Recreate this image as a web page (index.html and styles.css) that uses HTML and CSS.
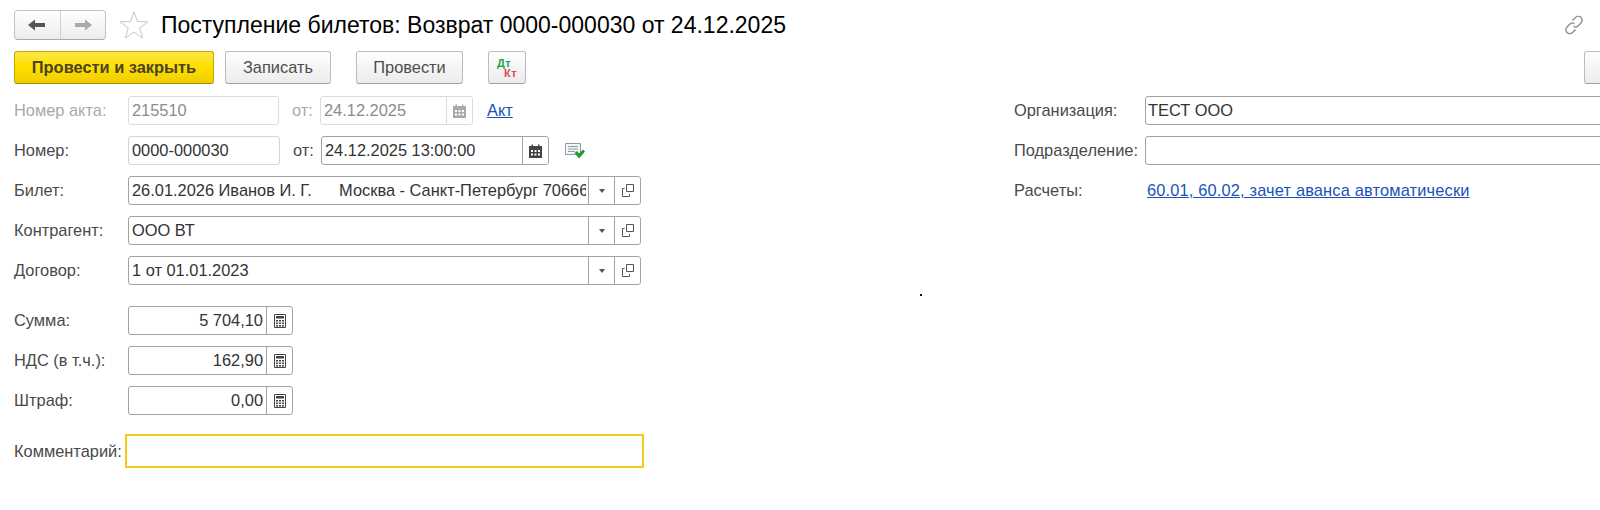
FILE: index.html
```html
<!DOCTYPE html>
<html>
<head>
  <meta charset="UTF-8">
  <title>Поступление билетов</title>
  <link rel="stylesheet" href="styles.css">
</head>
<body>
  <div class="page">
    <div class="title-row">
      <div class="nav-box">
        <div class="nav-btn">
          <svg width="18" height="12" viewBox="0 0 18 12"><path d="M0 6 L7 0.5 V4 H17 V8 H7 V11.500 Z" fill="#555"/></svg>
        </div>
        <div class="nav-btn">
          <svg width="18" height="12" viewBox="0 0 18 12"><path d="M18 6 L11 0.500 V4 H1 V8 H11 V11.500 Z" fill="#aaa"/></svg>
        </div>
      </div>
      <svg class="star" width="30" height="28" viewBox="0 0 30 28"><path d="M15 1 L18.500 10.500 L29 10.800 L20.700 17 L23.700 27 L15 21.200 L6.300 27 L9.300 17 L1 10.800 L11.500 10.500 Z" fill="#fff" stroke="#c4c8cc" stroke-width="1"/></svg>
      <h1 class="title">Поступление билетов: Возврат 0000-000030 от 24.12.2025</h1>
      <svg class="link-icon" width="20" height="20" viewBox="0 0 20 20" fill="none" stroke="#8c8c8c" stroke-width="1.4"><path d="M8.500 5.500 L11.500 2.500 C13 1 15.500 1 17 2.500 C18.500 4 18.500 6.500 17 8 L14 11 C12.700 12.300 10.800 12.300 9.500 11.200"/><path d="M11.500 14.500 L8.500 17.500 C7 19 4.500 19 3 17.500 C1.500 16 1.500 13.500 3 12 L6 9 C7.300 7.700 9.200 7.700 10.500 8.800"/></svg>
    </div>

    <div class="toolbar">
      <div class="btn btn-main">Провести и закрыть</div>
      <div class="btn btn-save">Записать</div>
      <div class="btn btn-post">Провести</div>
      <div class="btn btn-dtkt"><span class="dt">Дт</span><span class="kt">Кт</span></div>
      <div class="btn btn-more"></div>
    </div>

    <div class="form">
      <div class="col-left">
        <div class="row muted">
          <span class="label">Номер акта:</span>
          <div class="field w-num"><span class="value">215510</span></div>
          <span class="from">от:</span>
          <div class="field w-date">
            <span class="value">24.12.2025</span>
            <span class="addon">
              <svg width="13" height="14" viewBox="0 0 13 14"><path d="M0 2 H2.500 V0.500 H4 V2 H9 V0.500 H10.500 V2 H13 V14 H0 Z" fill="#aaa"/><path d="M2 6 H4 V8 H2 Z M5.500 6 H7.500 V8 H5.500 Z M9 6 H11 V8 H9 Z M2 9.500 H4 V11.500 H2 Z M5.500 9.500 H7.500 V11.500 H5.500 Z M9 9.500 H11 V11.500 H9 Z" fill="#fff"/></svg>
            </span>
          </div>
          <a class="link akt">Акт</a>
        </div>
        <div class="row">
          <span class="label">Номер:</span>
          <div class="field field-soft w-num2"><span class="value">0000-000030</span></div>
          <span class="from">от:</span>
          <div class="field w-datetime">
            <span class="value">24.12.2025 13:00:00</span>
            <span class="addon">
              <svg width="13" height="14" viewBox="0 0 13 14"><path d="M0 2 H2.500 V0.500 H4 V2 H9 V0.500 H10.500 V2 H13 V14 H0 Z" fill="#444"/><path d="M2 6 H4 V8 H2 Z M5.500 6 H7.500 V8 H5.500 Z M9 6 H11 V8 H9 Z M2 9.500 H4 V11.500 H2 Z M5.500 9.500 H7.500 V11.500 H5.500 Z M9 9.500 H11 V11.500 H9 Z" fill="#fff"/></svg>
            </span>
          </div>
          <svg class="doc-check" width="20" height="16" viewBox="0 0 20 16"><path d="M0.500 0.500 H15.500 V11.500 H0.500 Z" fill="#f4f6f8" stroke="#8a9bb0"/><path d="M3 3.500 H13 M3 6 H13 M3 8.500 H10" stroke="#8a9bb0"/><path d="M9.500 10 L12 8 L14 10.500 L18 6.500 L20 8.500 L14 15.500 Z" fill="#1f9a2d"/></svg>
        </div>
        <div class="row">
          <span class="label">Билет:</span>
          <div class="field w-wide">
            <span class="value clip">26.01.2026 Иванов И. Г.&nbsp;&nbsp;&nbsp;&nbsp;&nbsp; Москва - Санкт-Петербург 706666</span>
            <span class="addon"><i class="caret"></i></span>
            <span class="addon"><svg width="12" height="13" viewBox="0 0 12 13" fill="none" stroke="#555"><path d="M4.500 0.500 H11.500 V7.500 H4.500 Z"/><path d="M2.500 4.500 H0.500 V12.500 H1 M0.500 12.500 H7.500 V10"/></svg></span>
          </div>
        </div>
        <div class="row">
          <span class="label">Контрагент:</span>
          <div class="field w-wide">
            <span class="value clip">ООО ВТ</span>
            <span class="addon"><i class="caret"></i></span>
            <span class="addon"><svg width="12" height="13" viewBox="0 0 12 13" fill="none" stroke="#555"><path d="M4.500 0.500 H11.500 V7.500 H4.500 Z"/><path d="M2.500 4.500 H0.500 V12.500 H1 M0.500 12.500 H7.500 V10"/></svg></span>
          </div>
        </div>
        <div class="row">
          <span class="label">Договор:</span>
          <div class="field w-wide">
            <span class="value clip">1 от 01.01.2023</span>
            <span class="addon"><i class="caret"></i></span>
            <span class="addon"><svg width="12" height="13" viewBox="0 0 12 13" fill="none" stroke="#555"><path d="M4.500 0.500 H11.500 V7.500 H4.500 Z"/><path d="M2.500 4.500 H0.500 V12.500 H1 M0.500 12.500 H7.500 V10"/></svg></span>
          </div>
        </div>
        <div class="row group-start">
          <span class="label">Сумма:</span>
          <div class="field w-sum">
            <span class="value num">5 704,10</span>
            <span class="addon"><svg width="12" height="14" viewBox="0 0 12 14"><path d="M0.500 0.500 H11.500 V13.500 H0.500 Z" fill="#fff" stroke="#444"/><path d="M2 2 H10 V4.500 H2 Z M2 6 H4 V7.500 H2 Z M5 6 H7 V7.500 H5 Z M8 6 H10 V7.500 H8 Z M2 8.500 H4 V10 H2 Z M5 8.500 H7 V10 H5 Z M8 8.500 H10 V10 H8 Z M2 11 H4 V12.500 H2 Z M5 11 H7 V12.500 H5 Z M8 11 H10 V12.500 H8 Z" fill="#444"/></svg></span>
          </div>
        </div>
        <div class="row">
          <span class="label">НДС (в т.ч.):</span>
          <div class="field w-sum">
            <span class="value num">162,90</span>
            <span class="addon"><svg width="12" height="14" viewBox="0 0 12 14"><path d="M0.500 0.500 H11.500 V13.500 H0.500 Z" fill="#fff" stroke="#444"/><path d="M2 2 H10 V4.500 H2 Z M2 6 H4 V7.500 H2 Z M5 6 H7 V7.500 H5 Z M8 6 H10 V7.500 H8 Z M2 8.500 H4 V10 H2 Z M5 8.500 H7 V10 H5 Z M8 8.500 H10 V10 H8 Z M2 11 H4 V12.500 H2 Z M5 11 H7 V12.500 H5 Z M8 11 H10 V12.500 H8 Z" fill="#444"/></svg></span>
          </div>
        </div>
        <div class="row">
          <span class="label">Штраф:</span>
          <div class="field w-sum">
            <span class="value num">0,00</span>
            <span class="addon"><svg width="12" height="14" viewBox="0 0 12 14"><path d="M0.500 0.500 H11.500 V13.500 H0.500 Z" fill="#fff" stroke="#444"/><path d="M2 2 H10 V4.500 H2 Z M2 6 H4 V7.500 H2 Z M5 6 H7 V7.500 H5 Z M8 6 H10 V7.500 H8 Z M2 8.500 H4 V10 H2 Z M5 8.500 H7 V10 H5 Z M8 8.500 H10 V10 H8 Z M2 11 H4 V12.500 H2 Z M5 11 H7 V12.500 H5 Z M8 11 H10 V12.500 H8 Z" fill="#444"/></svg></span>
          </div>
        </div>
        <div class="row row-comment">
          <span class="label label-comment">Комментарий:</span>
          <div class="field-focus"></div>
        </div>
      </div>

      <div class="col-right">
        <div class="row">
          <span class="label label-right">Организация:</span>
          <div class="field w-right"><span class="value value-right">ТЕСТ ООО</span></div>
        </div>
        <div class="row">
          <span class="label label-right">Подразделение:</span>
          <div class="field w-right"></div>
        </div>
        <div class="row">
          <span class="label label-right">Расчеты:</span>
          <a class="link calc-link">60.01, 60.02, зачет аванса автоматически</a>
        </div>
      </div>
    </div>
    <span class="cursor-dot"></span>
  </div>
</body>
</html>
```

FILE: styles.css
```css
body {
  margin: 0;
  background: #fff;
  overflow: hidden;
  font-family: "Liberation Sans", Arial, sans-serif;
  font-size: 16.4px;
  color: #4a4a4a;
}

.page {
  position: relative;
  height: 510px;
  padding: 10px 0 0 14px;
  box-sizing: border-box;
  overflow: hidden;
}

.title-row {
  display: flex;
  align-items: center;
  height: 30px;
}

.nav-box {
  display: flex;
  width: 92px;
  height: 30px;
  box-sizing: border-box;
  border: 1px solid #c4c4c4;
  border-bottom-color: #aaa;
  border-radius: 4px;
  background: linear-gradient(#fff, #ececec);
}

.nav-btn {
  flex: 1;
  display: flex;
  align-items: center;
  justify-content: center;
}

.nav-btn + .nav-btn {
  border-left: 1px solid #d0d0d0;
}

.star {
  margin-left: 13px;
}

.title {
  margin: 0 0 0 12px;
  font-size: 23px;
  font-weight: normal;
  color: #000;
  white-space: nowrap;
}

.link-icon {
  margin-left: auto;
  margin-right: 16px;
}

.toolbar {
  display: flex;
  height: 33px;
  margin-top: 11px;
}

.btn {
  display: flex;
  align-items: center;
  justify-content: center;
  box-sizing: border-box;
  height: 33px;
  border: 1px solid #bcbcbc;
  border-bottom-color: #a0a0a0;
  border-radius: 3px;
  background: linear-gradient(#fff, #ebebeb);
  color: #4d4d4d;
  white-space: nowrap;
}

.btn-main {
  width: 200px;
  border-color: #c2a800;
  border-bottom-color: #a58f00;
  background: linear-gradient(#fbe64c, #ffe100 45%, #f0cd00);
  color: #4a4220;
  font-weight: bold;
}

.btn-save {
  width: 106px;
  margin-left: 11px;
}

.btn-post {
  width: 107px;
  margin-left: 25px;
}

.btn-dtkt {
  display: block;
  width: 38px;
  margin-left: 25px;
  padding: 6px 0 0 8px;
  font-size: 11px;
  font-weight: bold;
  letter-spacing: 0.5px;
  line-height: 10px;
}

.dt {
  display: block;
  color: #18a34a;
}

.kt {
  display: block;
  margin-left: 7px;
  color: #e04a50;
}

.btn-more {
  width: 40px;
  margin-left: auto;
  margin-right: -24px;
}

.form {
  display: flex;
  margin-top: 12px;
}

.col-left {
  width: 1000px;
  flex: none;
}

.col-right {
  flex: none;
}

.row {
  display: flex;
  align-items: center;
  height: 29px;
  margin-bottom: 11px;
  white-space: nowrap;
}

.label {
  width: 114px;
  flex: none;
}

.label-right {
  width: 131px;
}

.from {
  width: 28px;
  margin-left: 13px;
  flex: none;
}

.field {
  display: flex;
  align-items: center;
  box-sizing: border-box;
  height: 29px;
  border: 1px solid #a3a3a3;
  border-radius: 3px;
  background: #fff;
  color: #333;
  flex: none;
}

.field-soft {
  border-color: #d4d4d4;
}

.value {
  flex: 1;
  min-width: 0;
  padding: 0 3px;
}

.value-right {
  padding-left: 2px;
}

.clip {
  overflow: hidden;
  padding-right: 0;
  margin-right: 2px;
}

.num {
  text-align: right;
}

.addon {
  display: flex;
  align-items: center;
  justify-content: center;
  box-sizing: border-box;
  flex: none;
  width: 26px;
  height: 100%;
  border-left: 1px solid #a3a3a3;
}

.caret {
  display: block;
  width: 0;
  height: 0;
  border-left: 3px solid transparent;
  border-right: 3px solid transparent;
  border-top: 4px solid #555;
}

.w-num {
  width: 151px;
}

.w-num2 {
  width: 152px;
}

.w-date {
  width: 153px;
}

.w-datetime {
  width: 228px;
}

.w-wide {
  width: 513px;
}

.w-sum {
  width: 165px;
}

.w-right {
  width: 600px;
}

.muted,
.muted .field {
  color: #a9a9a9;
}

.muted .value {
  color: #8c8c8c;
}

.muted .field,
.muted .addon {
  border-color: #dcdcdc;
}

.link {
  color: #1a52b8;
  text-decoration: underline;
}

.akt {
  margin-left: 14px;
}

.calc-link {
  margin-left: 2px;
  letter-spacing: 0.16px;
}

.doc-check {
  margin-left: 16px;
}

.group-start {
  margin-top: 21px;
}

.row-comment {
  height: 34px;
  margin-top: 19px;
}

.label-comment {
  width: 111px;
}

.field-focus {
  width: 519px;
  height: 34px;
  box-sizing: border-box;
  border: 2px solid #f7c914;
  flex: none;
}

.cursor-dot {
  position: absolute;
  left: 920px;
  top: 294px;
  width: 2px;
  height: 2px;
  background: #111;
}
```
